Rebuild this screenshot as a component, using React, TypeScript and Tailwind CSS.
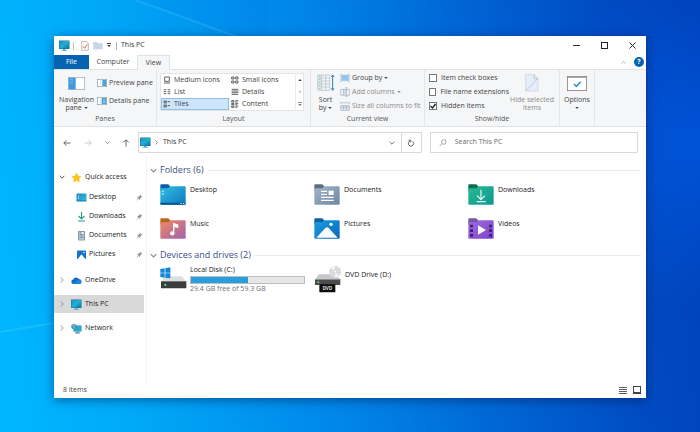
import React from 'react';

type IconProps = { className?: string };

const PcIcon = ({ className = 'w-[11px] h-[11px]' }: IconProps) => (
  <svg viewBox="0 0 22 22" className={className}>
    <defs>
      <linearGradient id="pc" x1="0" y1="0" x2="1" y2="1">
        <stop offset="0" stopColor="#1b8fca" />
        <stop offset=".5" stopColor="#22b0cf" />
        <stop offset="1" stopColor="#0b6fae" />
      </linearGradient>
    </defs>
    <rect x="0" y="1" width="21" height="17" rx="1" fill="#1670a8" />
    <rect x="1" y="2" width="19" height="15" fill="url(#pc)" />
    <path d="M8 18h5v2h3v1.500H5V20h3z" fill="#5aa9cc" />
  </svg>
);

const NetworkIcon = () => (
  <svg viewBox="0 0 22 22" className="w-[11px] h-[11px]">
    <rect x="5" y="5" width="16" height="12" rx="1" fill="#1b7fb5" />
    <rect x="6" y="6" width="14" height="10" fill="#27a9d0" />
    <path d="M11 17h4v2h3v2H8v-2h3z" fill="#4c8fb0" />
    <circle cx="6" cy="7" r="5.500" fill="#3d8fb5" />
    <path d="M2 6c2-4 6-4 7-2-1 2-4 2-4 4s3 1 3 3" stroke="#bfe6f2" strokeWidth="1.300" fill="none" />
  </svg>
);

const StarIcon = () => (
  <svg viewBox="0 0 22 22" className="w-[11px] h-[11px]">
    <path d="M11 2l2.700 6 6.500.8-4.800 4.500 1.300 6.500L11 16.500l-5.700 3.300 1.300-6.500L1.800 8.800l6.500-.8z" fill="#fcc419" stroke="#f7b500" strokeWidth="1" />
  </svg>
);

const CloudIcon = () => (
  <svg viewBox="0 0 22 22" className="w-[11px] h-[11px]">
    <path d="M5 18a4.600 4.600 0 0 1-.7-9.100A6.600 6.600 0 0 1 16.300 8.500 5 5 0 0 1 18 18z" fill="#0f6cc4" />
    <path d="M5 18C8 14.500 13 10.500 16.500 8.700A4.800 4.800 0 0 1 18 18z" fill="#1b86dc" />
  </svg>
);

const SmallDesktop = () => (
  <svg viewBox="0 0 22 22" className="w-[11px] h-[11px]">
    <defs>
      <linearGradient id="sd" x1="0" y1="0" x2="1" y2="1">
        <stop offset="0" stopColor="#1a86c7" />
        <stop offset="1" stopColor="#35c3dc" />
      </linearGradient>
    </defs>
    <rect x="1" y="3" width="20" height="16" rx="1.500" fill="url(#sd)" />
    <path d="M4 7h2v2H4zM4 11h2v2H4z" fill="#d8f3fb" />
    <path d="M1 17h20v1.500H1z" fill="#1674b0" />
  </svg>
);

const SmallDownload = () => (
  <svg viewBox="0 0 22 22" className="w-[11px] h-[11px]" fill="none" stroke="#1fa187" strokeWidth="2.200">
    <path d="M11 2v13M5 10l6 6 6-6M4 20h14" />
  </svg>
);

const SmallDocument = () => (
  <svg viewBox="0 0 22 22" className="w-[11px] h-[11px]">
    <rect x="4" y="2" width="14" height="19" rx="1.500" fill="#8699ad" />
    <rect x="6" y="4" width="10" height="15" fill="#c3d0dd" />
    <path d="M7 6h4M7 9h8M7 12h8M7 15h8" stroke="#5f7690" strokeWidth="1.300" />
    <rect x="12" y="5" width="3" height="3" fill="#fff" />
  </svg>
);

const SmallPicture = () => (
  <svg viewBox="0 0 22 22" className="w-[11px] h-[11px]">
    <rect x="2" y="3" width="18" height="17" rx="1.500" fill="#1273c9" />
    <path d="M3.500 20l7.500-9.500L18.500 20z" fill="#fff" />
    <circle cx="16" cy="7" r="1.600" fill="#fff" />
  </svg>
);

const PinIcon = () => (
  <svg viewBox="0 0 16 16" className="w-[7px] h-[7px]">
    <path d="M9 1.500L14.500 7l-1.500.8-1-.3-2.300 2.500.1 2.700-1.200 1.200L2.500 7.500l1.200-1.200 2.600.1L8.700 4l-.4-1.200z" fill="#8f959b" />
    <path d="M5.500 10.500L1.500 14.500" stroke="#8a8f95" strokeWidth="1.500" />
  </svg>
);

const Chevron = ({ className = '', d }: { className?: string; d: string }) => (
  <svg viewBox="0 0 10 10" className={`shrink-0 ${className}`} fill="none" stroke="currentColor" strokeWidth="1.500">
    <path d={d} />
  </svg>
);
const DOWN = 'M1 3l4 4 4-4';
const RIGHT = 'M3 1l4 4-4 4';
const UP = 'M1 7l4-4 4 4';

const Caret = ({ className = '' }: IconProps) => (
  <svg viewBox="0 0 8 8" className={`inline-block shrink-0 w-1 h-1 ${className}`}>
    <path d="M0.500 2h7L4 6z" fill="currentColor" />
  </svg>
);

/* Big folder icons. Every folder is the same shape with its own colours and emblem. */
interface FolderProps {
  id: string;
  tab: string;
  from: string;
  to: string;
  children?: React.ReactNode;
}

const Folder: React.FC<FolderProps> = ({ id, tab, from, to, children }) => (
  <svg viewBox="0 0 78 63" className="w-[26px] h-[21px] shrink-0">
    <defs>
      <linearGradient id={id} x1="0" y1="0" x2="1" y2="1">
        <stop offset="0" stopColor={from} />
        <stop offset="1" stopColor={to} />
      </linearGradient>
    </defs>
    <path d="M1 4q0-3 3-3h19q3 0 5 3l3 4v12H1z" fill={tab} />
    <path d="M1 13h22q3 0 5-3l1-1q2-2 4-2h41q3 0 3 3v49q0 3-3 3H4q-3 0-3-3z" fill={`url(#${id})`} />
    {children}
  </svg>
);

const FOLDERS: { name: string; icon: React.ReactNode }[] = [
  {
    name: 'Desktop',
    icon: (
      <Folder id="f-desk" tab="#0f5fae" from="#35c0e2" to="#0a78c0">
        <path d="M7 20h4v4H7zM7 28h4v4H7z" fill="#d6f5fb" />
        <path d="M1 56h76v3q0 3-3 3H4q-3 0-3-3z" fill="#0b558f" />
        <path d="M61 57h4v3h-4zM69 57h4v3h-4z" fill="#d6f5fb" />
      </Folder>
    ),
  },
  {
    name: 'Documents',
    icon: (
      <Folder id="f-doc" tab="#5b6f80" from="#a3b5c8" to="#6d86a3">
        <path d="M21 22h18M21 31h18M21 40h38M21 49h38" stroke="#fff" strokeWidth="3.500" />
        <rect x="44" y="20" width="15" height="13" fill="#fff" />
      </Folder>
    ),
  },
  {
    name: 'Downloads',
    icon: (
      <Folder id="f-down" tab="#0b6b50" from="#27bb8c" to="#0f9797">
        <path d="M39 17v29M27 35l12 12 12-12M26 53h27" stroke="#e9fbf6" strokeWidth="3.500" fill="none" />
      </Folder>
    ),
  },
  {
    name: 'Music',
    icon: (
      <Folder id="f-music" tab="#b5651d" from="#f08a60" to="#a25fb0">
        <path d="M41 46V17l12 4v7l-9-3" stroke="#fff" strokeWidth="3.500" fill="#fff" />
        <circle cx="37" cy="46" r="6.500" fill="#fff" />
      </Folder>
    ),
  },
  {
    name: 'Pictures',
    icon: (
      <Folder id="f-pic" tab="#0d5ea8" from="#1b9fe4" to="#0c64b8">
        <path d="M7 59l27-29q5-4 10 0l27 29z" fill="#f7fcff" />
        <circle cx="51" cy="19" r="5" fill="#f7fcff" />
      </Folder>
    ),
  },
  {
    name: 'Videos',
    icon: (
      <Folder id="f-vid" tab="#7458a8" from="#a06be0" to="#7d42cc">
        <path d="M6 20h9v8H6zM6 34h9v8H6zM6 48h9v8H6zM63 20h9v8h-9zM63 34h9v8h-9zM63 48h9v8h-9z" fill="#3d2273" />
        <path d="M30 22l24 14-24 14z" fill="#fff" />
      </Folder>
    ),
  },
];

const DiskIcon = () => (
  <svg viewBox="0 0 81 69" className="w-[27px] h-[23px] shrink-0">
    <path d="M15 28h50l14 16H3z" fill="#dcdee0" />
    <rect x="3" y="42" width="76" height="22" rx="2" fill="#3a3c3e" />
    <rect x="3" y="42" width="76" height="3" fill="#717477" />
    <circle cx="16" cy="54" r="3.500" fill="#4be26a" />
    <path d="M1 6l13-2v13H1zM16 4l15-3v16H16zM1 19h13v13L1 30zM16 19h15v15l-15-2z" fill="#0f86dc" />
  </svg>
);

const DvdIcon = () => (
  <svg viewBox="0 0 84 84" className="w-[28px] h-[28px] shrink-0">
    <path d="M14 28h52l13 16H3z" fill="#c6c8ca" />
    <circle cx="63" cy="20" r="18" fill="#d9dadb" />
    <path d="M63 20L50 8a18 18 0 0 1 13-6zM63 20l13 12a18 18 0 0 1-13 6z" fill="#f3f3f3" />
    <circle cx="63" cy="20" r="5" fill="#fafafa" stroke="#b5b7b9" strokeWidth="1.500" />
    <rect x="3" y="42" width="76" height="18" rx="1" fill="#4a4c4e" />
    <rect x="3" y="42" width="76" height="3" fill="#8b8d8f" />
    <circle cx="13" cy="52" r="3" fill="#4be26a" />
    <rect x="16" y="58" width="48" height="24" rx="2" fill="#0d0d0d" />
    <text x="40" y="75" textAnchor="middle" fontSize="14" fontWeight="600" fill="#fff">DVD</text>
  </svg>
);

/* Ribbon icons */
const PaneIcon = ({ side }: { side: 'preview' | 'details' }) => (
  <svg viewBox="0 0 30 24" className="w-[10px] h-[8px] shrink-0">
    <rect x="1" y="1" width="28" height="22" fill="#fff" stroke="#8f9aa5" strokeWidth="2" />
    <path d={side === 'preview' ? 'M16 3h12v18H16z' : 'M14 3h14v18H14z'} fill="#4fa3dc" />
    <path d={side === 'preview' ? 'M11 2v20' : 'M11 2v20M18 8h7M18 12h7M18 16h7'} stroke="#b4dbf3" strokeWidth="2" />
  </svg>
);

const NavPaneIcon = () => (
  <svg viewBox="0 0 51 39" className="w-[17px] h-[13px]">
    <rect x="1" y="1" width="49" height="37" fill="#fff" stroke="#9aa1a8" strokeWidth="2" />
    <rect x="2" y="2" width="21" height="35" fill="#3f9ae0" />
    <path d="M6 7h9M6 13h9M6 19h9" stroke="#8cc6f0" strokeWidth="2" />
  </svg>
);

const SortIcon = () => (
  <svg viewBox="0 0 54 54" className="w-[18px] h-[18px]" fill="none">
    <path d="M2 3h36v46H2zM2 12h36M2 21h36M2 30h36M2 39h36M14 3v46M26 3v46" stroke="#a9bccb" strokeWidth="2" />
    <path d="M5 7h6M5 16h6M5 25h6M5 34h6M5 44h6" stroke="#7fc4a8" strokeWidth="3" />
    <path d="M47 4v44M43 9l4-6 4 6M43 43l4 6 4-6" stroke="#2f7fa8" strokeWidth="3" />
  </svg>
);

const HideIcon = () => (
  <svg viewBox="0 0 42 54" className="w-[14px] h-[18px]">
    <path d="M2 2h26l11 12v37H2z" fill="#e4edf8" stroke="#b6c3d6" strokeWidth="2" strokeDasharray="5 2" />
    <path d="M28 2v12h11M2 51L37 15" stroke="#a9b8cf" strokeWidth="2" fill="none" />
  </svg>
);

const OptionsIcon = () => (
  <svg viewBox="0 0 60 45" className="w-[20px] h-[15px]">
    <rect x="1" y="1" width="58" height="43" fill="#fff" stroke="#777" strokeWidth="2.500" />
    <path d="M2 4h56" stroke="#999" strokeWidth="3" />
    <path d="M21 24l7 7 13-14" stroke="#2f8fd0" strokeWidth="4.500" fill="none" />
  </svg>
);

const LAYOUTS = [
  { name: 'Medium icons', d: 'M5 3h14v13H5zM3 21h18' },
  { name: 'Small icons', d: 'M2 3h7v6H2zM14 3h7v6h-7zM2 15h7v6H2zM14 15h7v6h-7z' },
  { name: 'List', d: 'M2 5h8M14 5h8M2 11h8M14 11h8M2 17h8M14 17h8' },
  { name: 'Details', d: 'M2 4h20M2 9h20M2 14h20M2 19h20' },
  { name: 'Tiles', d: 'M3 3h7v6H3zM3 15h7v6H3zM14 5h7M14 17h7' },
  { name: 'Content', d: 'M2 2h7v4H2zM2 10h7v4H2zM2 18h7v4H2zM13 2h9M13 6h6M13 10h9M13 14h6M13 18h9M13 22h6' },
];

const CURRENT_VIEW = [
  { name: 'Group by', enabled: true, caret: true, d: 'M3 2v24M25 2v24', fill: 'M5 5h18v17H5z' },
  { name: 'Add columns', enabled: false, caret: true, d: 'M2 7h24v16H2zM10 7v16M18 2v25M15 2h6M15 27h6', fill: 'M11 8h6v14h-6z' },
  { name: 'Size all columns to fit', enabled: false, caret: false, d: 'M2 2v7M26 2v7M4 5h20M2 13h24v13H2zM2 19h24M10 13v13M18 13v13', fill: 'M3 14h22v4H3z' },
];

const RibbonGroup: React.FC<{ label: string; className?: string; children: React.ReactNode }> = ({ label, className = '', children }) => (
  <section className={`flex flex-col shrink-0 border-r border-[#e4e6e8] ${className}`}>
    <div className="flex h-[42px]">{children}</div>
    <div className="h-[14px] leading-[14px] text-center text-[#555]">{label}</div>
  </section>
);

const BigButton: React.FC<{ icon: React.ReactNode; className?: string; children: React.ReactNode }> = ({ icon, className = '', children }) => (
  <button className={`flex flex-col items-center shrink-0 leading-[8px] ${className}`}>
    <span className="h-[26px] flex items-center justify-center">{icon}</span>
    {children}
  </button>
);

const CheckOption = ({ label, checked = false }: { label: string; checked?: boolean }) => (
  <label className="relative flex items-center gap-1 h-[14px]">
    <input type="checkbox" defaultChecked={checked} className="peer appearance-none w-2 h-2 border border-[#777] bg-white" />
    <svg viewBox="0 0 8 8" className="absolute left-0 w-2 h-2 hidden peer-checked:block" fill="none" stroke="#222" strokeWidth="1.400">
      <path d="M1.500 4l2 2 3-4" />
    </svg>
    {label}
  </label>
);

const Ribbon = () => (
  <div className="flex h-[58px] shrink-0 bg-[#f5f6f7] border-y border-[#dfe1e3] text-[#444] whitespace-nowrap overflow-hidden">
    <RibbonGroup label="Panes" className="w-[103px]">
      <BigButton icon={<NavPaneIcon />} className="w-[43px] pl-0.5">
        <span>Navigation</span>
        <span>pane <Caret /></span>
      </BigButton>
      <div className="pt-1">
        <button className="flex items-center gap-0.5 h-[18px]"><PaneIcon side="preview" />Preview pane</button>
        <button className="flex items-center gap-0.5 h-[18px]"><PaneIcon side="details" />Details pane</button>
      </div>
    </RibbonGroup>

    <RibbonGroup label="Layout" className="w-[154px] px-[3px]">
      <div className="flex w-[144px] h-[38px] mt-[3px] bg-white border border-[#e2e4e6]">
        <div className="grid grid-cols-[68px_66px] grid-rows-3">
          {LAYOUTS.map(({ name, d }) => (
            <button
              key={name}
              className={`flex items-center gap-[3px] h-3 pl-px border ${name === 'Tiles' ? 'bg-[#cce4fc] border-[#8fbfe8]' : 'border-transparent'}`}
            >
              <svg viewBox="0 0 24 24" className="w-2 h-2 shrink-0" fill="none" stroke="#444" strokeWidth="2.500">
                <path d={d} />
              </svg>
              {name}
            </button>
          ))}
        </div>
        <div className="flex-1 flex flex-col border-l border-[#ececec]">
          <button aria-label="Scroll up" className="h-3 flex items-center justify-center"><Caret className="rotate-180" /></button>
          <button aria-label="Scroll down" className="h-3 flex items-center justify-center text-[#bbb]"><Caret /></button>
          <button aria-label="More layouts" className="h-3 flex flex-col items-center justify-center text-[#777]">
            <span className="w-1 h-px bg-[#999]" />
            <Caret />
          </button>
        </div>
      </div>
    </RibbonGroup>

    <RibbonGroup label="Current view" className="w-[114px]">
      <BigButton icon={<SortIcon />} className="w-[29px]">
        <span>Sort</span>
        <span>by <Caret /></span>
      </BigButton>
      <div className="pt-px">
        {CURRENT_VIEW.map(item => (
          <button key={item.name} className={`flex items-center gap-0.5 h-[14px] ${item.enabled ? '' : 'text-[#8a8a8a]'}`}>
            <svg viewBox="0 0 28 28" className="w-[10px] h-[10px] shrink-0" fill="none">
              <path d={item.fill} fill={item.enabled ? '#8fc7ee' : '#cfe0ef'} />
              <path d={item.d} stroke={item.enabled ? '#7ea6c4' : '#9fb0c0'} strokeWidth="2" />
            </svg>
            {item.name}
            {item.caret && <Caret />}
          </button>
        ))}
      </div>
    </RibbonGroup>

    <RibbonGroup label="Show/hide" className="w-[135px]">
      <div className="pt-px pl-1 w-[84px]">
        <CheckOption label="Item check boxes" />
        <CheckOption label="File name extensions" />
        <CheckOption label="Hidden items" checked />
      </div>
      <BigButton icon={<HideIcon />} className="w-[46px] text-[#8a8a8a]">
        <span>Hide selected</span>
        <span>items</span>
      </BigButton>
    </RibbonGroup>

    <RibbonGroup label="" className="w-[35px]">
      <BigButton icon={<OptionsIcon />} className="w-[34px]">
        <span>Options</span>
        <span><Caret /></span>
      </BigButton>
    </RibbonGroup>
  </div>
);

const TitleBar = () => (
  <header className="flex items-center h-[19px] shrink-0 pl-[5px] text-[#333]">
    <PcIcon />
    <span className="w-px h-2 mx-[3px] bg-[#c4c4c4]" />
    <button aria-label="Properties" className="ml-1">
      <svg viewBox="0 0 24 30" className="w-2 h-[10px]">
        <path d="M2 2h15l5 5v21H2z" fill="#fff" stroke="#9a9a9a" strokeWidth="2" />
        <path d="M6 16l5 6 8-12" stroke="#d9663a" strokeWidth="3" fill="none" />
      </svg>
    </button>
    <button aria-label="New folder" className="ml-1">
      <svg viewBox="0 0 30 27" className="w-[10px] h-[9px]">
        <path d="M1 3h10l3 4h15v18H1z" fill="#c6d5e9" />
      </svg>
    </button>
    <button aria-label="Customize Quick Access Toolbar" className="ml-1 w-1 flex flex-col items-center">
      <span className="w-1 h-px bg-[#444]" />
      <Caret />
    </button>
    <span className="w-px h-2 ml-[5px] mr-1 bg-[#b4b4b4]" />
    <h1>This PC</h1>
    <div className="ml-auto flex self-stretch">
      <button aria-label="Minimize" className="w-7 flex items-center justify-center">
        <span className="w-[7px] h-px bg-[#333]" />
      </button>
      <button aria-label="Maximize" className="w-7 flex items-center justify-center">
        <span className="w-[7px] h-[7px] border border-[#222]" />
      </button>
      <button aria-label="Close" className="w-7 flex items-center justify-center">
        <svg viewBox="0 0 14 14" className="w-[7px] h-[7px]" stroke="#222" strokeWidth="2"><path d="M1 1l12 12M13 1L1 13" /></svg>
      </button>
    </div>
  </header>
);

const Tabs = () => (
  <nav className="flex h-[14px] shrink-0 text-[#444]">
    <button className="w-[35px] bg-[#0563b1] text-white">File</button>
    <button className="w-12">Computer</button>
    <button className="w-[33px] h-[15px] relative bg-[#f5f6f7] border border-b-0 border-[#dfe1e3]">View</button>
    <div className="ml-auto flex items-center gap-2 pr-0.5">
      <button aria-label="Minimize the Ribbon"><Chevron d={UP} className="w-[5px] h-[5px] text-[#999]" /></button>
      <button aria-label="Help" className="w-[10px] h-[10px] leading-[10px] rounded-full bg-[#0563b1] text-white font-bold">?</button>
    </div>
  </nav>
);

const Arrow = ({ d, className = '' }: { d: string; className?: string }) => (
  <svg viewBox="0 0 16 16" className={`w-2 h-2 ${className}`} fill="none" stroke="currentColor" strokeWidth="2"><path d={d} /></svg>
);

const AddressRow = () => (
  <div className="flex items-center shrink-0 pt-[5px] pl-[9px] pr-2 text-[#666]">
    <button aria-label="Back"><Arrow d="M15 8H2M7 2.500L1.500 8 7 13.500" /></button>
    <button aria-label="Forward" className="ml-[13px]"><Arrow d="M1 8h13M9 2.500L14.500 8 9 13.500" className="text-[#ccc]" /></button>
    <button aria-label="Recent locations" className="ml-[13px]"><Chevron d={DOWN} className="w-[5px] h-[5px]" /></button>
    <button aria-label="Up" className="ml-3"><Arrow d="M8 15V2M2.500 7L8 1.500 13.500 7" /></button>
    <div className="ml-2 flex-[284] flex items-center h-[21px] border border-[#d9d9d9] min-w-0">
      <span className="ml-px"><PcIcon /></span>
      <Chevron d={RIGHT} className="w-[5px] h-[5px] ml-[3px]" />
      <span className="ml-1 text-[#333]">This PC</span>
      <button aria-label="Previous locations" className="ml-auto mr-[6px]"><Chevron d={DOWN} className="w-[6px] h-[6px]" /></button>
      <button aria-label="Refresh" className="w-5 self-stretch border-l border-[#d9d9d9] flex items-center justify-center">
        <svg viewBox="0 0 16 16" className="w-2 h-2" fill="none" stroke="currentColor" strokeWidth="2">
          <path d="M11.500 5A5.300 5.300 0 1 1 6 4M3 2.500h4.500V7" />
        </svg>
      </button>
    </div>
    <label className="ml-2 flex-[208] flex items-center h-[21px] border border-[#d9d9d9] min-w-0">
      <svg viewBox="0 0 16 16" className="ml-2 w-2 h-2 shrink-0" fill="none" stroke="#888" strokeWidth="1.500">
        <circle cx="9.500" cy="6" r="4.500" />
        <path d="M6.200 9.300L1 14.500" />
      </svg>
      <input type="search" aria-label="Search This PC" placeholder="Search This PC" className="ml-2 flex-1 min-w-0 bg-transparent outline-none placeholder:text-[#6b6b6b]" />
    </label>
  </div>
);

const PINNED = [
  { name: 'Desktop', icon: <SmallDesktop /> },
  { name: 'Downloads', icon: <SmallDownload /> },
  { name: 'Documents', icon: <SmallDocument /> },
  { name: 'Pictures', icon: <SmallPicture /> },
];

const TreeRow: React.FC<{ label: string; icon: React.ReactNode; open?: boolean; selected?: boolean }> = ({ label, icon, open, selected }) => (
  <button className={`flex items-center w-full h-[18px] pl-[5px] ${selected ? 'bg-[#d9d9d9]' : ''}`}>
    <Chevron d={open ? DOWN : RIGHT} className={`w-[6px] h-[6px] ${open ? 'text-[#444]' : 'text-[#888]'}`} />
    <span className="ml-[6px] mr-[3px]">{icon}</span>
    {label}
  </button>
);

const Sidebar = () => (
  <nav className="w-[93px] shrink-0 pt-[11px] pr-0.5 border-r border-[#f3f3f3] text-[#222]">
    <TreeRow label="Quick access" icon={<StarIcon />} open />
    <ul className="pt-0.5 pb-[7px]">
      {PINNED.map(({ name, icon }) => (
        <li key={name}>
          <button className="flex items-center w-full h-[19px] pl-[22px] pr-px">
            {icon}
            <span className="ml-[2px]">{name}</span>
            <span className="ml-auto"><PinIcon /></span>
          </button>
        </li>
      ))}
    </ul>
    <div className="flex flex-col gap-[6px]">
      <TreeRow label="OneDrive" icon={<CloudIcon />} />
      <TreeRow label="This PC" icon={<PcIcon />} selected />
      <TreeRow label="Network" icon={<NetworkIcon />} />
    </div>
  </nav>
);

const SectionTitle = ({ children }: { children: React.ReactNode }) => (
  <h2 className="flex items-center h-3 text-[9px] leading-[12px] text-[#3b4f88]">
    <Chevron d={DOWN} className="w-[7px] h-[7px] mr-[3px] text-[#888]" />
    {children}
    <span className="flex-1 h-px ml-1 bg-[#e9e9e9]" />
  </h2>
);

const DISK = { total: 59.3, free: 29.4 };

const Content = () => (
  <main className="flex-1 min-w-0 pl-[3px] pr-[5px] pt-[7px] text-[#222]">
    <SectionTitle>Folders (6)</SectionTitle>
    <div className="grid grid-cols-[repeat(auto-fill,154px)] gap-y-[13px] pt-2 pl-[10px]">
      {FOLDERS.map(({ name, icon }) => (
        <a key={name} href="#" className="flex gap-1 leading-[12px]">
          {icon}
          {name}
        </a>
      ))}
    </div>
    <div className="mt-[10px]">
      <SectionTitle>Devices and drives (2)</SectionTitle>
    </div>
    <div className="grid grid-cols-[repeat(auto-fill,154px)] pt-1 pl-[10px]">
      <a href="#" className="flex gap-[3px]">
        <span className="pt-0.5"><DiskIcon /></span>
        <span className="w-[115px] leading-[10px]">
          <span className="block">Local Disk (C:)</span>
          <span className="block h-2 mt-px bg-[#e6e6e6] border border-[#bcbcbc]">
            <span className="block h-full bg-[#26a0da]" style={{ width: `${100 - (DISK.free / DISK.total) * 100}%` }} />
          </span>
          <span className="block text-[#6d6d6d]">29.4 GB free of 59.3 GB</span>
        </span>
      </a>
      <a href="#" className="flex gap-[3px]">
        <DvdIcon />
        <span className="pt-1 leading-[12px]">DVD Drive (D:)</span>
      </a>
    </div>
  </main>
);

const StatusBar = () => (
  <footer className="flex items-center h-4 shrink-0 pl-[9px] pr-[5px] text-[#444]">
    8 items
    <div className="ml-auto flex gap-[6px] text-[#333]">
      <button aria-label="Details view">
        <svg viewBox="0 0 8 8" className="w-2 h-2" stroke="currentColor"><path d="M0 1.500h8M0 3.500h8M0 5.500h8M0 7.500h8" strokeWidth=".8" /></svg>
      </button>
      <button aria-label="Large icons view" className="w-2 h-2 border border-b-2 border-[#444]" />
    </div>
  </footer>
);

/* Faint light ray that crosses the wallpaper */
const LightRay = () => (
  <svg viewBox="0 0 700 432" preserveAspectRatio="none" aria-hidden="true" className="absolute inset-0 w-full h-full">
    <path d="M136 0L268 48" stroke="#3fc0ff" strokeOpacity=".35" strokeWidth="2" />
    <path d="M136 0L268 48V0z" fill="#003cc8" fillOpacity=".04" />
    <path d="M0 332L60 322" stroke="#4fd0ff" strokeOpacity=".3" strokeWidth="2" />
  </svg>
);

const App: React.FC = () => (
  <div className="relative min-h-screen flex flex-col pt-9 pb-[34px] px-[54px] bg-[radial-gradient(circle_at_100%_33%,rgba(0,96,240,0.55),transparent_22%),linear-gradient(84deg,#00b7fe_0%,#00a9f9_18%,#0086e8_46%,#0068d6_66%,#004cc3_86%,#0040b8_100%)] font-['Open_Sans','Liberation_Sans',sans-serif] text-[7px]">
    <LightRay />
    <div className="relative flex-1 flex flex-col bg-white shadow-[0_2px_10px_rgba(0,20,70,0.5)]">
      <TitleBar />
      <Tabs />
      <Ribbon />
      <AddressRow />
      <div className="flex-1 flex mt-1">
        <Sidebar />
        <Content />
      </div>
      <StatusBar />
    </div>
  </div>
);

export default App;
